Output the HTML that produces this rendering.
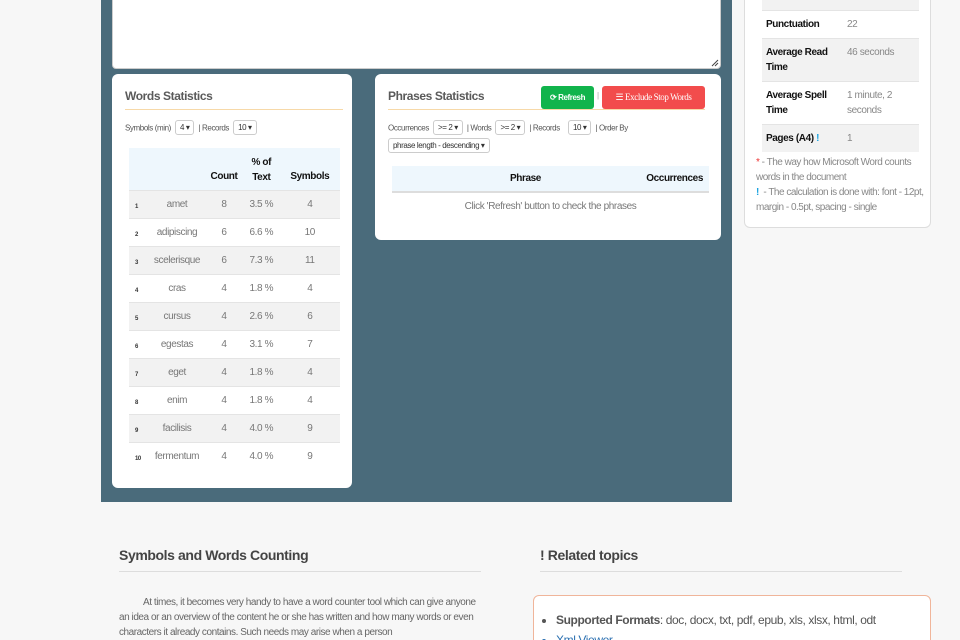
<!DOCTYPE html>
<html><head><style>
*{box-sizing:border-box;margin:0;padding:0}
html,body{width:960px;height:640px;overflow:hidden}
body{background:#f7f7f7;font-family:"Liberation Sans Narrow","Liberation Sans",sans-serif;position:relative;color:#555;letter-spacing:-0.4px}
.abs{position:absolute}
.dark{left:101px;top:0;width:631px;height:502px;background:#4a6b7b}
.card{background:#fff;border-radius:6px;position:absolute}
.ta{left:112px;top:-6px;width:609px;height:75px;background:#fff;border-radius:4px;border:1px solid #ccc}
h3{font-size:12px;font-weight:bold;color:#5a5a5a}
.sel{display:inline-block;border:1px solid #ccc;border-radius:3px;padding:2px 4px;font-size:8px;color:#333;background:#fff;vertical-align:middle}
.lbl{font-size:8px;color:#555;vertical-align:middle}
table{border-collapse:collapse}
.wt td{height:28px;font-size:10px;color:#777;text-align:center;border-top:1px solid #e4e4e4}
.wt tr:nth-child(even) td{background:#f2f2f2}
.wt td.n{font-size:6px;color:#333;font-weight:bold;text-align:left;padding-left:6px;padding-top:6px}
.rt td{font-size:10px;vertical-align:top;padding:6px 4px;border-top:1px solid #e4e4e4;line-height:15px}
.rt td:first-child{font-weight:bold;color:#111;width:81px}
.rt td:last-child{color:#888}
.rt tr.g td{background:#f2f2f2}
</style></head><body>
<div class="abs dark"></div>
<div class="abs ta"><svg class="abs" style="right:1px;bottom:1px" width="8" height="8"><path d="M1 7L7 1M4 7L7 4" stroke="#444" stroke-width="1"/></svg></div>

<div class="card" style="left:112px;top:74px;width:240px;height:414px">
 <h3 class="abs" style="left:13px;top:15px">Words Statistics</h3>
 <div class="abs" style="left:13px;top:35px;width:218px;border-top:1px solid #f7d9a8"></div>
 <div class="abs" style="left:13px;top:45px;white-space:nowrap"><span class="lbl">Symbols (min)</span> <span class="sel">4 ▾</span> <span class="lbl">| Records</span> <span class="sel">10 ▾</span></div>
 <table class="wt abs" style="left:17px;top:74px;width:211px">
  <tr><td style="background:#eef7fd;height:42px;border:none;width:20px"></td><td style="background:#eef7fd;border:none;width:56px"></td><td style="background:#eef7fd;border:none;color:#111;font-weight:bold;vertical-align:bottom;padding-bottom:8px;width:38px">Count</td><td style="background:#eef7fd;border:none;color:#111;font-weight:bold;line-height:15px;padding-top:2px">% of<br>Text</td><td style="background:#eef7fd;border:none;color:#111;font-weight:bold;vertical-align:bottom;padding-bottom:8px">Symbols</td></tr>
  <tr><td class="n">1</td><td>amet</td><td>8</td><td>3.5 %</td><td>4</td></tr>
  <tr><td class="n">2</td><td>adipiscing</td><td>6</td><td>6.6 %</td><td>10</td></tr>
  <tr><td class="n">3</td><td>scelerisque</td><td>6</td><td>7.3 %</td><td>11</td></tr>
  <tr><td class="n">4</td><td>cras</td><td>4</td><td>1.8 %</td><td>4</td></tr>
  <tr><td class="n">5</td><td>cursus</td><td>4</td><td>2.6 %</td><td>6</td></tr>
  <tr><td class="n">6</td><td>egestas</td><td>4</td><td>3.1 %</td><td>7</td></tr>
  <tr><td class="n">7</td><td>eget</td><td>4</td><td>1.8 %</td><td>4</td></tr>
  <tr><td class="n">8</td><td>enim</td><td>4</td><td>1.8 %</td><td>4</td></tr>
  <tr><td class="n">9</td><td>facilisis</td><td>4</td><td>4.0 %</td><td>9</td></tr>
  <tr><td class="n">10</td><td>fermentum</td><td>4</td><td>4.0 %</td><td>9</td></tr>
 </table>
</div>

<div class="card" style="left:375px;top:74px;width:346px;height:166px">
 <h3 class="abs" style="left:13px;top:15px">Phrases Statistics</h3>
 <div class="abs" style="left:166px;top:12px;width:53px;height:23px;background:#11b44c;border-radius:3px;color:#fff;font-size:8px;line-height:23px;text-align:center;font-weight:bold">⟳ Refresh</div>
 <div class="abs lbl" style="left:222px;top:17px;color:#aaa">|</div>
 <div class="abs" style="left:227px;top:12px;width:103px;height:23px;background:#f24c4c;border-radius:3px;color:#fff;font-size:9px;line-height:23px;text-align:center;font-family:'Liberation Serif',serif">☰ Exclude Stop Words</div>
 <div class="abs" style="left:13px;top:35px;width:317px;border-top:1px solid #f7d9a8"></div>
 <div class="abs" style="left:13px;top:45px;white-space:nowrap"><span class="lbl">Occurrences</span> <span class="sel">&gt;= 2 ▾</span> <span class="lbl">| Words</span> <span class="sel">&gt;= 2 ▾</span> <span class="lbl">| Records</span> &nbsp;<span class="sel">10 ▾</span> <span class="lbl">| Order By</span></div>
 <div class="abs" style="left:13px;top:63px"><span class="sel">phrase length - descending ▾</span></div>
 <div class="abs" style="left:17px;top:92px;width:317px;height:27px;background:#eef7fd;border-bottom:2px solid #ddd;font-size:10px;font-weight:bold;color:#111"><span class="abs" style="left:118px;top:7px">Phrase</span><span class="abs" style="right:6px;top:7px">Occurrences</span></div>
 <div class="abs" style="left:17px;top:127px;width:317px;text-align:center;font-size:10px;color:#777">Click 'Refresh' button to check the phrases</div>
</div>

<div class="card" style="left:744px;top:-10px;width:187px;height:238px;border:1px solid #ddd">
 <div class="abs" style="left:17px;top:0;width:157px;height:19px;background:#f2f2f2"></div>
 <table class="rt abs" style="left:17px;top:19px;width:157px">
  <tr><td>Punctuation</td><td>22</td></tr>
  <tr class="g"><td>Average Read Time</td><td>46 seconds</td></tr>
  <tr><td>Average Spell Time</td><td>1 minute, 2 seconds</td></tr>
  <tr class="g"><td>Pages (A4) <b style="color:#1ca3e0">!</b></td><td>1</td></tr>
 </table>
 <div class="abs" style="left:11px;top:164px;width:172px;font-size:10px;line-height:15px;color:#888;letter-spacing:-0.5px"><span style="color:#e33">*</span> - The way how Microsoft Word counts words in the document<br><b style="color:#1ca3e0">!</b>&nbsp; - The calculation is done with: font - 12pt, margin - 0.5pt, spacing - single</div>
</div>

<h3 class="abs" style="left:119px;top:547px;font-size:14px;color:#444">Symbols and Words Counting</h3>
<div class="abs" style="left:119px;top:571px;width:362px;border-top:1px solid #ddd"></div>
<div class="abs" style="left:119px;top:595px;width:362px;font-size:10px;line-height:15px;color:#666;text-indent:24px;letter-spacing:-0.45px">At times, it becomes very handy to have a word counter tool which can give anyone an idea or an overview of the content he or she has written and how many words or even characters it already contains. Such needs may arise when a person</div>

<h3 class="abs" style="left:540px;top:547px;font-size:14px;color:#444">! Related topics</h3>
<div class="abs" style="left:540px;top:571px;width:362px;border-top:1px solid #ddd"></div>
<div class="abs" style="left:533px;top:595px;width:398px;height:60px;background:#fff;border:1px solid #f0b59a;border-radius:6px"></div>
<ul class="abs" style="left:556px;top:610px;font-size:12px;line-height:20px;color:#555;list-style:disc;white-space:nowrap">
 <li><b>Supported Formats</b>: doc, docx, txt, pdf, epub, xls, xlsx, html, odt</li>
 <li style="color:#2a6fb0">Xml Viewer</li>
</ul>
</body></html>
